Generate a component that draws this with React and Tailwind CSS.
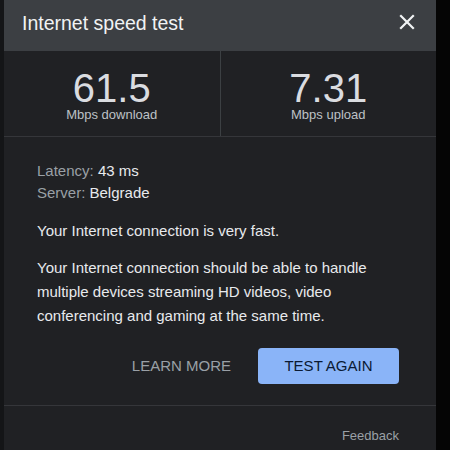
export default function App() {
  return (
    <div className="flex h-[450px] w-[450px] overflow-hidden bg-[#050505]" style={{ fontFamily: '"Liberation Sans", Arial, sans-serif' }}>
      <div className="w-[4px] bg-[#141517]" />
      <div className="flex w-[432px] flex-col bg-[#202124]">
        <div className="flex h-[51px] items-center justify-between bg-[#3c3f43] pb-[6px] pl-[18px] pr-[21px]">
          <span className="text-[19.5px] leading-[26px] text-[#f1f3f4]">Internet speed test</span>
          <svg width="16" height="16" viewBox="0 0 16 16" className="mb-[2px] text-[#f1f3f4]">
            <path d="M2 2L14 14M14 2L2 14" stroke="currentColor" strokeWidth="2.2" strokeLinecap="square" />
          </svg>
        </div>
        <div className="flex h-[86px] border-b border-[#35363a]">
          <div className="flex flex-1 flex-col items-center border-r border-[#3c4043] pt-[18px]">
            <span className="text-[40px] leading-[38px] text-[#dadce0]">61.5</span>
            <span className="text-[13px] leading-[15px] text-[#bdc1c6]">Mbps download</span>
          </div>
          <div className="flex flex-1 flex-col items-center pt-[18px]">
            <span className="text-[40px] leading-[38px] text-[#dadce0]">7.31</span>
            <span className="text-[13px] leading-[15px] text-[#bdc1c6]">Mbps upload</span>
          </div>
        </div>
        <div className="flex flex-1 flex-col px-[33px] pt-[23px] text-[15px] text-[#e8eaed]">
          <div className="leading-[22px]"><span className="text-[#9aa0a6]">Latency: </span>43 ms</div>
          <div className="leading-[22px]"><span className="text-[#9aa0a6]">Server: </span>Belgrade</div>
          <p className="mt-[15px] leading-[24px]">Your Internet connection is very fast.</p>
          <p className="mt-[13px] leading-[24px]">Your Internet connection should be able to handle multiple devices streaming HD videos, video conferencing and gaming at the same time.</p>
          <div className="mt-[20px] flex items-center justify-end gap-[27px] pr-[4px]">
            <span className="text-[15px] uppercase text-[#9aa0a6]">Learn more</span>
            <div className="flex h-[36px] w-[141px] items-center justify-center rounded-[4px] bg-[#8ab4f8] text-[15px] uppercase text-[#0b1a33]">Test again</div>
          </div>
        </div>
        <div className="flex h-[45px] justify-end border-t border-[#35363a] pr-[37px] pt-[20px] text-[13px] text-[#9aa0a6]">
          Feedback
        </div>
      </div>
    </div>
  );
}
